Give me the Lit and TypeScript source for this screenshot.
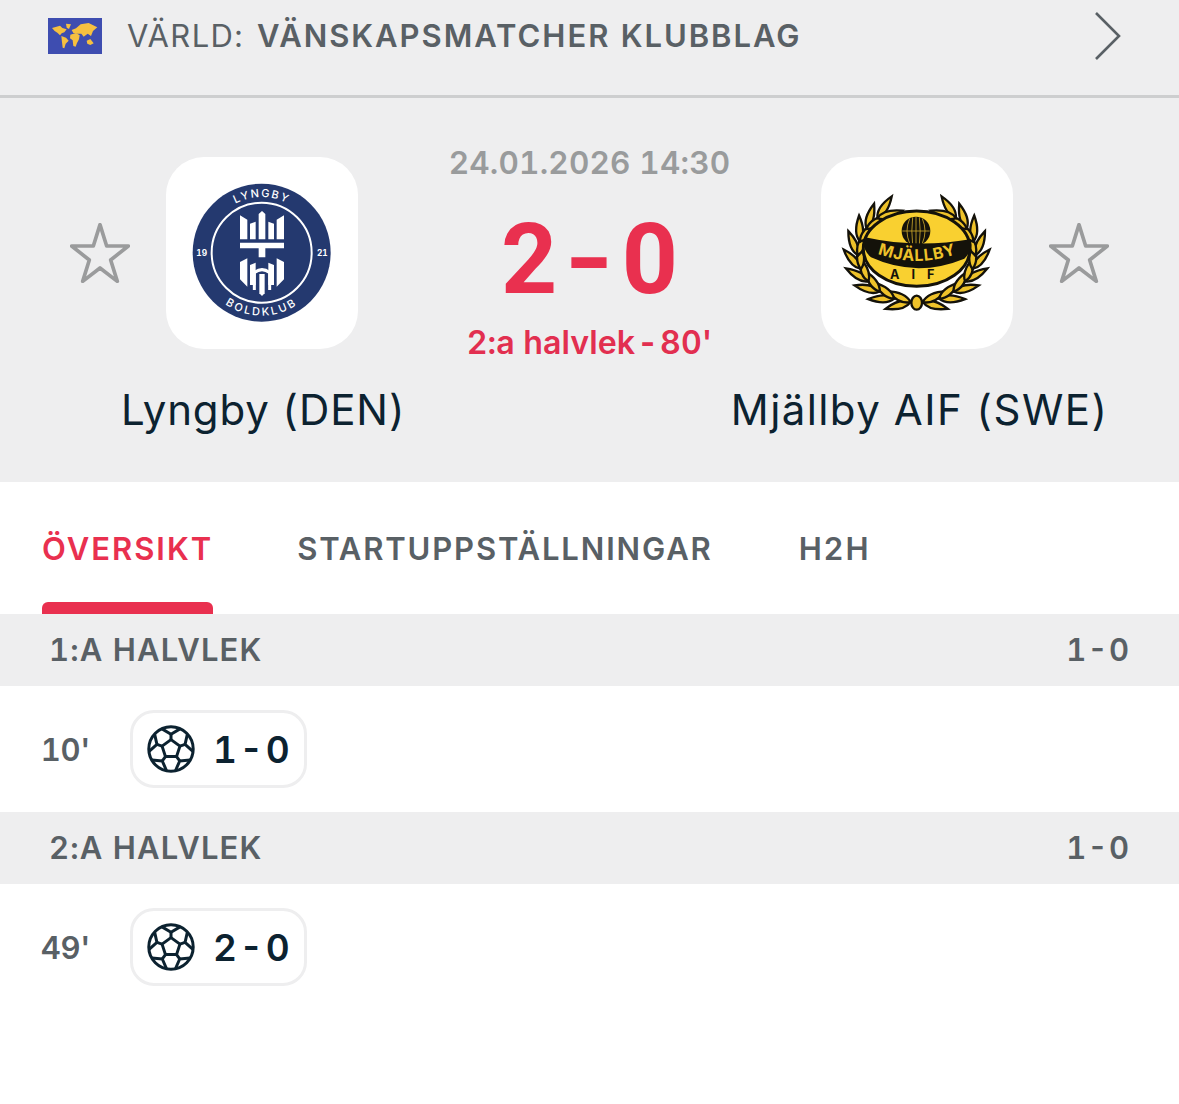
import { LitElement, html, css, svg } from "lit";
import { customElement } from "lit/decorators.js";

const FLAG_LAND = [
  "36 54 L60 47 L67 54 L80 58 L73 67 L65 70 L60 76 L52 68 L44 63Z",
  "78 41 L93 43 L87 57 L80 53Z",
  "64 78 L78 83 L86 92 L77 101 L73 115 L68 113 L66 97Z",
  "91 74 L108 69 L119 76 L117 88 L111 99 L107 110 L100 108 L98 91 L90 85Z",
  "95 60 L108 55 L122 43 L146 39 L172 52 L159 63 L153 78 L143 71 L131 80 L124 71 L112 71 L100 69Z",
  "140 92 L151 87 L161 100 L151 105 L142 101Z",
];

function wreathSide() {
  const out: unknown[] = [];
  const n = 9;
  for (let i = 0; i < n; i++) {
    const t = (96 + (i * 132) / (n - 1)) * (Math.PI / 180);
    const x = 305 + 176 * Math.cos(t);
    const y = 312 + 145 * Math.sin(t);
    const tan = (Math.atan2(145 * Math.cos(t), -176 * Math.sin(t)) * 180) / Math.PI;
    const leaf = "M0 0 Q26 -21 78 0 Q26 21 0 0Z";
    out.push(svg`<path d=${leaf} transform="translate(${x} ${y}) rotate(${tan - 20})" fill="#eec22a" stroke="#14120a" stroke-width="7"/>`);
    out.push(svg`<path d=${leaf} transform="translate(${x} ${y}) rotate(${tan + 20})" fill="#eec22a" stroke="#14120a" stroke-width="7"/>`);
  }
  return out;
}

@customElement("app-root")
export class AppRoot extends LitElement {
  static styles = css`
    :host {
      display: block;
      width: 1179px;
      height: 1104px;
      background: #fff;
      font-family: Inter, "Liberation Sans", sans-serif;
      font-variant-numeric: tabular-nums;
      overflow: hidden;
    }
    .league {
      box-sizing: content-box;
      background: #eeeeef;
      border-bottom: 3px solid #cdcecf;
      display: flex;
      align-items: center;
      padding: 0 57px 24px 48px;
      height: 71px;
      color: #596065;
      font-size: 31px;
      letter-spacing: 1.35px;
    }
    .flag {
      width: 54px;
      height: 36px;
      flex: none;
      margin-right: 25px;
    }
    .league b {
      font-weight: 600;
      margin-left: 13px;
      letter-spacing: 1.97px;
    }
    .chev {
      margin-left: auto;
      width: 28px;
      height: 50px;
      flex: none;
    }
    .match {
      background: #eeeeef;
      height: 384px;
      padding-top: 59px;
      box-sizing: border-box;
    }
    .top {
      display: grid;
      grid-template-columns: 166px 192px 1fr 192px 166px;
      height: 192px;
      align-items: center;
    }
    .star {
      width: 60px;
      height: 60px;
      display: block;
    }
    .star.l {
      justify-self: end;
      margin-right: 36px;
    }
    .star.r {
      justify-self: start;
      margin-left: 36px;
    }
    .logo {
      width: 192px;
      height: 192px;
      border-radius: 38px;
      background: #fff;
      display: block;
    }
    .mid {
      display: flex;
      flex-direction: column;
      align-items: center;
      height: 192px;
    }
    .date {
      color: #999b9c;
      font-size: 31.5px;
      font-weight: 600;
      letter-spacing: 0.2px;
      line-height: 38px;
      margin-top: -13px;
      white-space: nowrap;
    }
    .score {
      color: #e9304f;
      font-family: Roboto, sans-serif;
      font-weight: 700;
      font-size: 98px;
      line-height: 100px;
      margin-top: 28px;
      display: flex;
      gap: 13px;
    }
    .score .dash {
      display: inline-block;
      transform: scale(1.3, 1);
    }
    .status {
      color: #e22f50;
      font-size: 32.2px;
      font-weight: 600;
      line-height: 38px;
      margin-top: 14px;
      white-space: nowrap;
    }
    .status .sep {
      word-spacing: -6.5px;
      font-weight: 700;
    }
    .names {
      display: grid;
      grid-template-columns: 524px 131px 524px;
      margin-top: 36px;
      color: #0c2230;
      font-size: 42px;
      line-height: 50px;
      text-align: center;
    }
    .names .home {
      letter-spacing: 0.85px;
      padding-left: 3px;
    }
    .names .away {
      letter-spacing: 1.4px;
      padding-left: 6px;
    }
    .tabs {
      height: 132px;
      display: flex;
      gap: 86px;
      padding-left: 42px;
      box-sizing: border-box;
      font-size: 31px;
      font-weight: 600;
      letter-spacing: 1.85px;
      color: #596065;
    }
    .tab {
      position: relative;
      padding-top: 48px;
      line-height: 38px;
      white-space: nowrap;
    }
    .tab.on {
      color: #e9304f;
      letter-spacing: 2px;
      margin-right: -2px;
    }
    .tab.on::after {
      content: "";
      position: absolute;
      left: 0;
      right: 0;
      bottom: 0;
      height: 12px;
      background: #e9304f;
      border-radius: 6px 6px 0 0;
    }
    .sec {
      height: 72px;
      box-sizing: border-box;
      background: #eeeeef;
      display: flex;
      align-items: center;
      justify-content: space-between;
      padding: 0 50px 2px 49px;
      color: #596065;
      font-size: 31px;
      font-weight: 600;
      letter-spacing: 1.15px;
    }
    .sec .tot {
      letter-spacing: 0;
      word-spacing: -7px;
      white-space: nowrap;
    }
    .row {
      height: 126px;
      display: flex;
      align-items: center;
      padding-left: 30px;
      box-sizing: border-box;
    }
    .min {
      width: 60px;
      text-align: right;
      color: #596065;
      font-size: 31px;
      letter-spacing: -0.3px;
      font-weight: 600;
      flex: none;
    }
    .badge {
      margin-left: 40px;
      width: 177px;
      height: 78px;
      box-sizing: border-box;
      border: 3px solid #eeeeef;
      border-radius: 24px;
      display: flex;
      align-items: center;
      padding-left: 14px;
      color: #0c2230;
      font-size: 37px;
      font-weight: 600;
      white-space: nowrap;
      word-spacing: -7.5px;
    }
    .ball {
      width: 48px;
      height: 48px;
      flex: none;
      margin-right: 18px;
    }
  `;

  private star(side: string) {
    return html`<svg class="star ${side}" viewBox="30 23 180 180" aria-hidden="true">
      <path d="M120 28 L140 92 L205 92 L152 134 L172 198 L120 158 L68 198 L88 134 L35 92 L100 92Z" fill="none" stroke="#9a9b9c" stroke-width="11" stroke-linejoin="round"/>
    </svg>`;
  }

  private ball() {
    const cx = 24, cy = 24;
    const pts = [0, 1, 2, 3, 4].map((i) => {
      const a = ((-90 + i * 72) * Math.PI) / 180;
      return { a, x: cx + 9.4 * Math.cos(a), y: cy + 9.4 * Math.sin(a), ox: cx + 14.8 * Math.cos(a), oy: cy + 14.8 * Math.sin(a) };
    });
    const edges = pts.map((p) => {
      const a1 = p.a - 0.42, a2 = p.a + 0.42;
      return svg`
        <path d="M${p.x} ${p.y} L${p.ox} ${p.oy}"/>
        <path d="M${cx + 22 * Math.cos(a1)} ${cy + 22 * Math.sin(a1)} L${p.ox} ${p.oy} L${cx + 22 * Math.cos(a2)} ${cy + 22 * Math.sin(a2)}"/>`;
    });
    return html`<svg class="ball" viewBox="0 0 48 48" aria-hidden="true">
      <g fill="none" stroke="#0c2230" stroke-width="3" stroke-linejoin="round">
        <circle cx="24" cy="24" r="22.2"/>
        <polygon points=${pts.map((p) => `${p.x},${p.y}`).join(" ")}/>
        ${edges}
      </g>
    </svg>`;
  }

  private lyngby() {
    return html`<svg class="logo" viewBox="18 21 576 576" aria-hidden="true">
      <circle cx="305" cy="308" r="207" fill="#24396f"/>
      <circle cx="305" cy="308" r="150" fill="none" stroke="#fff" stroke-width="6"/>
      <defs>
        <path id="ly-top" d="M305 308 m-167 0 a167 167 0 0 1 334 0"/>
        <path id="ly-bot" d="M305 308 m-189 0 a189 189 0 0 0 378 0"/>
      </defs>
      <g fill="#fff" font-family="Inter, sans-serif" font-weight="500">
        <text font-size="33" letter-spacing="5" text-anchor="middle"><textPath href="#ly-top" startOffset="50%">LYNGBY</textPath></text>
        <text font-size="33" letter-spacing="7" text-anchor="middle"><textPath href="#ly-bot" startOffset="50%">BOLDKLUB</textPath></text>
        <text x="125" y="317" font-size="25" font-weight="700" text-anchor="middle">19</text>
        <text x="487" y="319" font-size="25" font-weight="700" text-anchor="middle">21</text>
        <path d="M240 196 L262 209 V268 H240Z M270 221 L287 215 V268 H270Z M296 192 L306 183 L316 192 V268 H296Z M325 215 L342 221 V268 H325Z M350 209 L372 196 V268 H350Z"/>
        <path d="M240 278 H372 V295 H316 V322 H296 V295 H240Z"/>
        <path d="M240 336 L262 325 V410 L240 388Z M372 336 L350 325 V410 L372 388Z M270 345 L287 338 V405 H270Z M342 345 L325 338 V405 H342Z"/>
        <path d="M298 372 H314 V430 L306 438 L298 430Z"/>
      </g>
      <path d="M283 420 V368 Q306 350 329 368 V420" fill="none" stroke="#fff" stroke-width="9"/>
    </svg>`;
  }

  private mjallby() {
    const ballLines = "M303 201 V285 M262 243 H344 M284 206 Q268 243 284 280 M322 206 Q338 243 322 280 M293 202 Q288 243 293 284 M313 202 Q318 243 313 284";
    return html`<svg class="logo" viewBox="18 21 576 576" aria-hidden="true">
      ${wreathSide()}
      <g transform="translate(610 0) scale(-1 1)">${wreathSide()}</g>
      <ellipse cx="305" cy="458" rx="16" ry="21" fill="#eec22a" stroke="#14120a" stroke-width="7"/>
      <ellipse cx="305" cy="296" rx="160" ry="113" fill="#f9d030" stroke="#14120a" stroke-width="9"/>
      <circle cx="303" cy="243" r="43" fill="#14120a"/>
      <path d=${ballLines} fill="none" stroke="#c9a52a" stroke-width="2.5"/>
      <path d="M150 262 Q305 296 466 268 Q478 296 448 326 Q305 385 168 322 Q138 296 150 262Z" fill="#14120a"/>
      <defs><path id="mj-arc" d="M165 303 Q305 362 448 303"/></defs>
      <text font-family="Inter, sans-serif" font-weight="700" font-size="48" letter-spacing="2" fill="#eec22a" text-anchor="middle"><textPath href="#mj-arc" startOffset="50%">MJÄLLBY</textPath></text>
      <text x="310" y="387" font-family="Inter, sans-serif" font-weight="700" font-size="38" letter-spacing="36" fill="#14120a" text-anchor="middle">AIF</text>
    </svg>`;
  }

  render() {
    return html`
      <div class="league">
        <svg class="flag" viewBox="24 24 162 108" preserveAspectRatio="none" aria-hidden="true">
          <rect x="24" y="24" width="162" height="108" fill="#3e4db0"/>
          ${FLAG_LAND.map((d) => svg`<path d="M${d}" fill="#f6c040"/>`)}
        </svg>
        <span>VÄRLD:</span><b>VÄNSKAPSMATCHER KLUBBLAG</b>
        <svg class="chev" viewBox="0 0 28 50" aria-hidden="true">
          <path d="M2 2 L25 25 L2 48" fill="none" stroke="#596065" stroke-width="2.6"/>
        </svg>
      </div>
      <div class="match">
        <div class="top">
          ${this.star("l")}
          ${this.lyngby()}
          <div class="mid">
            <div class="date">24.01.2026 14:30</div>
            <div class="score"><span>2</span><span class="dash">-</span><span>0</span></div>
            <div class="status">2:a halvlek<span class="sep"> - </span>80'</div>
          </div>
          ${this.mjallby()}
          ${this.star("r")}
        </div>
        <div class="names">
          <div class="home">Lyngby (DEN)</div>
          <div></div>
          <div class="away">Mjällby AIF (SWE)</div>
        </div>
      </div>
      <div class="tabs">
        <div class="tab on">ÖVERSIKT</div>
        <div class="tab">STARTUPPSTÄLLNINGAR</div>
        <div class="tab">H2H</div>
      </div>
      <div class="sec"><span>1:A HALVLEK</span><span class="tot">1 - 0</span></div>
      <div class="row">
        <div class="min">10'</div>
        <div class="badge">${this.ball()}<span>1 - 0</span></div>
      </div>
      <div class="sec"><span>2:A HALVLEK</span><span class="tot">1 - 0</span></div>
      <div class="row">
        <div class="min">49'</div>
        <div class="badge">${this.ball()}<span>2 - 0</span></div>
      </div>
    `;
  }
}
